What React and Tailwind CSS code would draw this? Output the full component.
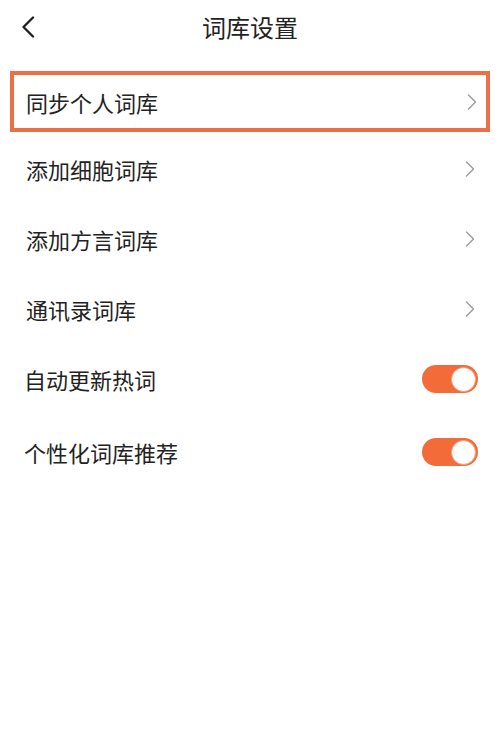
import React from "react";

const font = { fontFamily: '"Noto Sans CJK SC", "Noto Sans", sans-serif' };

function Chevron() {
  return (
    <svg width="10" height="16" viewBox="0 0 10 16" fill="none">
      <polyline points="1.5,1 8.5,8 1.5,15" stroke="#9a9a9a" strokeWidth="1.4" strokeLinecap="round" strokeLinejoin="round" />
    </svg>
  );
}

function Toggle() {
  return (
    <div className="w-[56px] h-[28px] rounded-full bg-[#f36b38] flex items-center justify-end pr-[2px]">
      <div className="w-[25px] h-[25px] rounded-full bg-white border border-[#f0a080]" />
    </div>
  );
}

function LinkRow({ label }) {
  return (
    <div className="h-[70px] flex items-center justify-between pl-[26px] pr-[25px]">
      <span className="text-[22px] leading-none text-[#222222]">{label}</span>
      <Chevron />
    </div>
  );
}

function ToggleRow({ label, className = "" }) {
  return (
    <div className={`h-[70px] flex items-center justify-between pl-[24px] pr-[22px] ${className}`}>
      <span className="text-[22px] leading-none text-[#222222]">{label}</span>
      <Toggle />
    </div>
  );
}

export default function App() {
  return (
    <div className="w-[500px] h-[753px] bg-white" style={font}>
      <div className="relative h-[54px] flex items-center justify-center">
        <div className="absolute left-[21px] top-[16px]">
          <svg width="14" height="22" viewBox="0 0 14 22" fill="none">
            <polyline points="12,1.5 2.5,11 12,20.5" stroke="#1e1e1e" strokeWidth="2.3" strokeLinecap="round" strokeLinejoin="round" />
          </svg>
        </div>
        <span className="text-[24px] leading-none text-[#222222]">词库设置</span>
      </div>
      <div className="px-[10px] pt-[17px]">
        <div className="h-[61px] border-[4px] border-[#ec7047] flex items-center justify-between pl-[12px] pr-[9px]">
          <span className="text-[22px] leading-none text-[#222222]">同步个人词库</span>
          <Chevron />
        </div>
      </div>
      <div className="pt-[2px]">
        <LinkRow label="添加细胞词库" />
        <LinkRow label="添加方言词库" />
        <LinkRow label="通讯录词库" />
        <ToggleRow label="自动更新热词" />
        <ToggleRow label="个性化词库推荐" className="mt-[3px]" />
      </div>
    </div>
  );
}
